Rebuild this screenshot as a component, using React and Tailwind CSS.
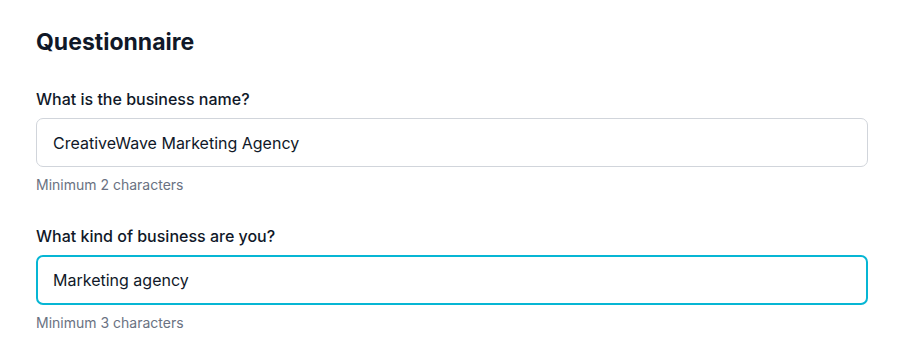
import React, { useState } from 'react';

function Field({ label, value, hint, focused }) {
  const [text, setText] = useState(value);
  return (
    <div className="flex flex-col">
      <label className="text-[16px] font-medium text-gray-900 leading-[22px] mb-[8px]">{label}</label>
      <input
        value={text}
        onChange={(e) => setText(e.target.value)}
        className={
          focused
            ? 'h-[50px] w-full rounded-[7px] border-2 border-[#06b6d4] bg-white px-[15px] text-[16px] text-gray-900 outline-none'
            : 'h-[49px] w-full rounded-[7px] border border-[#d1d5db] bg-white px-[16px] text-[16px] text-gray-900 outline-none'
        }
      />
      <p className="mt-[8px] text-[14px] leading-[20px] text-gray-500">{hint}</p>
    </div>
  );
}

export default function App() {
  return (
    <div className="min-h-screen bg-white" style={{ fontFamily: 'Inter, "Noto Sans", sans-serif' }}>
      <div className="w-[832px] ml-[36px] pt-[26px]">
        <h1 className="text-[23px] font-bold leading-[32px] text-gray-900 mb-[30px]">Questionnaire</h1>
        <div className="flex flex-col gap-[30px]">
          <Field label="What is the business name?" value="CreativeWave Marketing Agency" hint="Minimum 2 characters" />
          <Field label="What kind of business are you?" value="Marketing agency" hint="Minimum 3 characters" focused />
        </div>
      </div>
    </div>
  );
}
